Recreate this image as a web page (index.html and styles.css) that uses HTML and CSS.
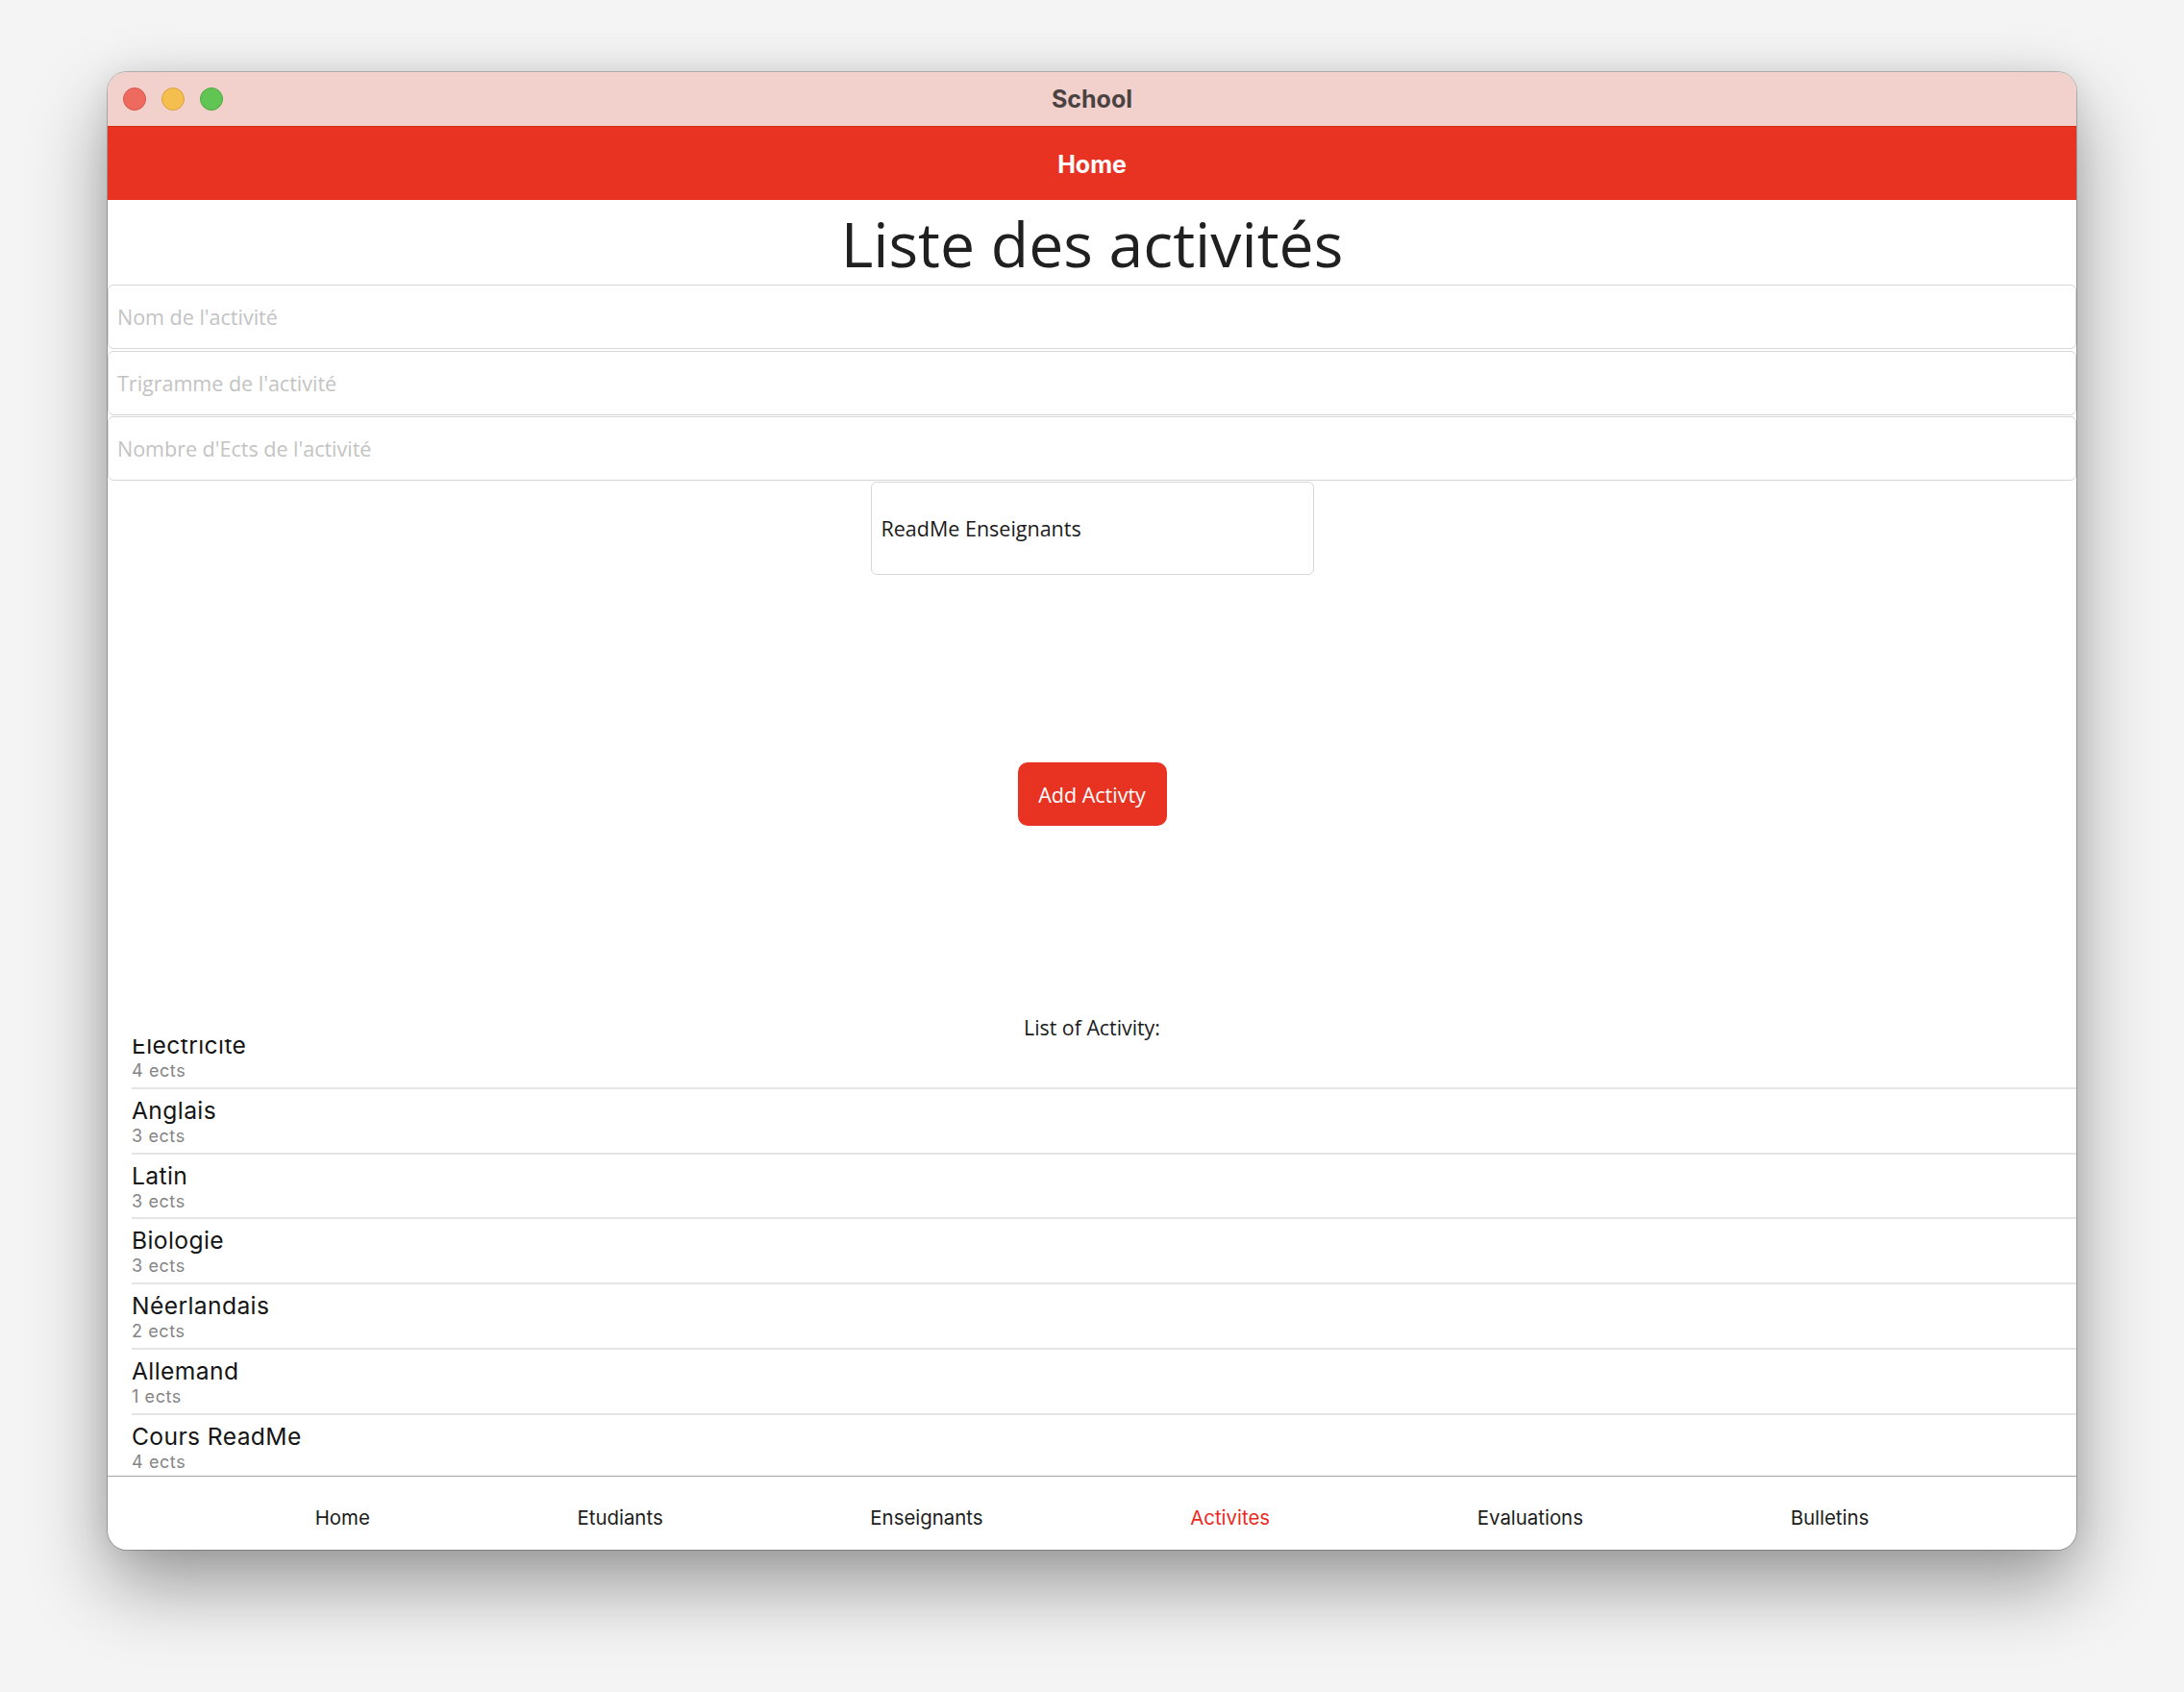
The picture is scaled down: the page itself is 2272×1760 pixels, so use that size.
FILE: index.html
```html
<!DOCTYPE html>
<html lang="fr">
<head>
<meta charset="utf-8">
<title>School</title>
<link rel="stylesheet" href="styles.css">
</head>
<body>
<div class="window">
  <div class="titlebar">
    <div class="lights">
      <span class="light red"></span>
      <span class="light yellow"></span>
      <span class="light green"></span>
    </div>
    <div class="title">School</div>
  </div>
  <div class="navbar">Home</div>
  <div class="main">
    <h1 class="heading">Liste des activités</h1>
    <div class="fields">
      <div class="field">Nom de l'activité</div>
      <div class="field">Trigramme de l'activité</div>
      <div class="field">Nombre d'Ects de l'activité</div>
    </div>
    <div class="picker">ReadMe Enseignants</div>
    <button class="add-btn">Add Activty</button>
    <div class="caption">List of Activity:</div>
    <div class="list">
      <div class="list-inner">
        <div class="row"><div class="row-title">Electricite</div><div class="row-sub">4 ects</div></div>
        <div class="row"><div class="row-title">Anglais</div><div class="row-sub">3 ects</div></div>
        <div class="row"><div class="row-title">Latin</div><div class="row-sub">3 ects</div></div>
        <div class="row"><div class="row-title">Biologie</div><div class="row-sub">3 ects</div></div>
        <div class="row"><div class="row-title">Néerlandais</div><div class="row-sub">2 ects</div></div>
        <div class="row"><div class="row-title">Allemand</div><div class="row-sub">1 ects</div></div>
        <div class="row"><div class="row-title">Cours ReadMe</div><div class="row-sub">4 ects</div></div>
      </div>
    </div>
  </div>
  <div class="tabbar">
    <span class="tab">Home</span>
    <span class="tab">Etudiants</span>
    <span class="tab">Enseignants</span>
    <span class="tab active">Activites</span>
    <span class="tab">Evaluations</span>
    <span class="tab">Bulletins</span>
  </div>
</div>
</body>
</html>
```
FILE: styles.css
```css
* { box-sizing: border-box; }
html, body {
  margin: 0;
  padding: 0;
}
body {
  width: 2272px;
  height: 1760px;
  background: #f4f4f4;
  overflow: hidden;
  padding-top: 75px;
  padding-left: 112px;
}
.window {
  width: 2048px;
  height: 1537px;
  border-radius: 20px;
  overflow: hidden;
  background: #ffffff;
  display: flex;
  flex-direction: column;
  box-shadow: 0 0 0 1px rgba(0,0,0,0.22), 0 36px 80px rgba(0,0,0,0.38), 0 0 30px rgba(0,0,0,0.08);
}
.titlebar {
  height: 57px;
  flex: none;
  background: #f2d0cc;
  border-bottom: 1px solid #d42515;
  position: relative;
  display: flex;
  align-items: center;
  justify-content: center;
}
.lights {
  position: absolute;
  left: 16px;
  top: 16px;
  display: flex;
  gap: 16px;
}
.light {
  width: 24px;
  height: 24px;
  border-radius: 50%;
  display: block;
}
.light.red { background: #ee6a5f; border: 1px solid #d5554a; }
.light.yellow { background: #f5bf4f; border: 1px solid #d9a13e; }
.light.green { background: #61c554; border: 1px solid #4fa843; }
.title {
  font-family: Inter, "Liberation Sans", sans-serif;
  font-weight: 700;
  font-size: 25px;
  color: #4b4242;
}
.navbar {
  height: 76px;
  flex: none;
  background: #e83323;
  color: #ffffff;
  font-family: Inter, "Liberation Sans", sans-serif;
  font-weight: 700;
  font-size: 25px;
  display: flex;
  align-items: center;
  justify-content: center;
  padding-top: 1px;
}
.main {
  flex: 1;
  min-height: 0;
  display: flex;
  flex-direction: column;
  align-items: center;
}
.heading {
  margin: 0;
  height: 88px;
  display: flex;
  align-items: center;
  justify-content: center;
  font-family: "Open Sans", sans-serif;
  font-weight: 400;
  font-size: 64.3px;
  color: #202020;
  padding-top: 2px;
}
.fields {
  width: 100%;
  display: flex;
  flex-direction: column;
  gap: 1.5px;
}
.field {
  height: 67px;
  border: 1px solid #d6d6d6;
  border-radius: 6px;
  display: flex;
  align-items: center;
  padding-left: 9px;
  font-family: "Open Sans", sans-serif;
  font-size: 21.5px;
  color: #c3c3c3;
}
.picker {
  margin-top: 1px;
  width: 461px;
  height: 97px;
  border: 1px solid #d8d8d8;
  border-radius: 6px;
  display: flex;
  align-items: center;
  padding-left: 10px;
  font-family: "Open Sans", sans-serif;
  font-size: 21.5px;
  color: #1b1b1b;
}
.add-btn {
  margin-top: 195px;
  width: 155px;
  height: 66px;
  border: none;
  border-radius: 10px;
  background: #e83323;
  color: #ffffff;
  font-family: "Open Sans", sans-serif;
  font-size: 21.5px;
  padding: 0;
}
.caption {
  margin-top: 198px;
  height: 24px;
  line-height: 24px;
  font-family: "Open Sans", sans-serif;
  font-size: 21.3px;
  color: #1b1b1b;
}
.list {
  align-self: stretch;
  flex: 1;
  min-height: 0;
  overflow: hidden;
}
.list-inner {
  margin-top: -16px;
}
.row {
  margin-left: 25px;
  padding-top: 8px;
  padding-bottom: 5.8px;
  border-bottom: 2px solid #e5e5e5;
  font-family: Inter, "Liberation Sans", sans-serif;
}
.row-title {
  font-size: 24.6px;
  line-height: 28px;
  color: #151515;
  letter-spacing: 0.4px;
}
.row-sub {
  margin-top: 2px;
  font-size: 18px;
  line-height: 22px;
  color: #858585;
  letter-spacing: 0.6px;
}
.tabbar {
  height: 77px;
  flex: none;
  border-top: 1px solid #a4a4a4;
  display: flex;
  align-items: center;
  justify-content: space-evenly;
  font-family: Inter, "Liberation Sans", sans-serif;
  font-size: 20.4px;
  color: #1c1c1c;
  padding-top: 8px;
}
.tab.active { color: #ea2a1c; }
```
